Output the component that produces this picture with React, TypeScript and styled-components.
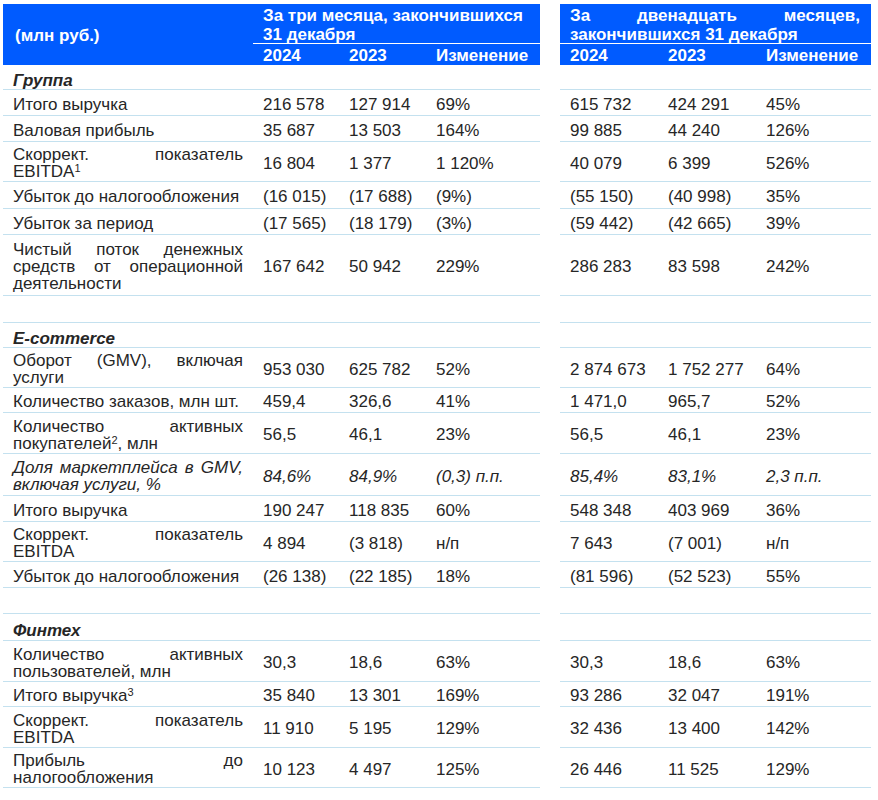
import React from 'react';
import styled, { createGlobalStyle } from 'styled-components';

const Global = createGlobalStyle`
  html, body { margin: 0; padding: 0; background: #ffffff; }
  body {
    font-family: "Liberation Sans", Arial, sans-serif;
    color: #262626;
  }
`;

const BLUE = '#005bff';
const RULE = '#c4e1ef';
const COLS = '250px 89px 88px 110px 20px 98px 98px 115px';

const Sheet = styled.div`
  width: 878px;
  box-sizing: border-box;
  padding: 4px 0 0 3px;
  font-size: 17px;
`;

const Head = styled.div`
  display: grid;
  grid-template-columns: ${COLS};
  grid-template-rows: 40px 21px;
  color: #ffffff;
  font-weight: bold;
`;

const UnitCell = styled.div`
  grid-column: 1;
  grid-row: 1 / 3;
  background: ${BLUE};
  display: flex;
  align-items: center;
  padding: 2px 0 0 12px;
`;

const PeriodCell = styled.div<{ $col: string }>`
  grid-column: ${(p) => p.$col};
  grid-row: 1;
  background: ${BLUE};
  border-bottom: 1px solid #ffffff;
  box-sizing: border-box;
  padding: 2px 11px 0 10px;
  line-height: 19px;
`;

const YearCell = styled.div<{ $col: number; $pad: number }>`
  grid-column: ${(p) => p.$col};
  grid-row: 2;
  background: ${BLUE};
  display: flex;
  align-items: center;
  padding: 2px 0 0 ${(p) => p.$pad}px;
  white-space: nowrap;
`;

const HeadGap = styled.div`
  grid-column: 5;
  grid-row: 1 / 3;
`;

const Row = styled.div<{ $h: number; $italic?: boolean }>`
  display: grid;
  grid-template-columns: ${COLS};
  height: ${(p) => p.$h}px;
  font-style: ${(p) => (p.$italic ? 'italic' : 'normal')};
`;

const Cell = styled.div<{ $pad?: number }>`
  display: flex;
  align-items: center;
  box-sizing: border-box;
  border-bottom: 1px solid ${RULE};
  padding: 3px 0 0 ${(p) => p.$pad ?? 10}px;
  white-space: nowrap;
  line-height: 17px;
`;

const LabelCell = styled(Cell)`
  padding: 3px 10px 0 10px;
  white-space: normal;
`;

const LabelText = styled.div`
  width: 230px;
`;

const SectionTitle = styled.span`
  font-weight: bold;
  font-style: italic;
  padding-top: 3px;
`;

const Gap = styled.div``;

const Line = styled.span<{ $just?: boolean }>`
  display: block;
  text-align: ${(p) => (p.$just ? 'justify' : 'left')};
  text-align-last: ${(p) => (p.$just ? 'justify' : 'auto')};
`;

const Sup = styled.sup`
  font-size: 11px;
  line-height: 0;
  vertical-align: 5px;
`;

type Kind = 'data' | 'section' | 'italic' | 'blank';

interface RowData {
  kind: Kind;
  h: number;
  label?: React.ReactNode[];
  q?: string[];
  y?: string[];
}

const rows: RowData[] = [
  { kind: 'section', h: 25, label: ['Группа'] },
  { kind: 'data', h: 26, label: ['Итого выручка'], q: ['216 578', '127 914', '69%'], y: ['615 732', '424 291', '45%'] },
  { kind: 'data', h: 26, label: ['Валовая прибыль'], q: ['35 687', '13 503', '164%'], y: ['99 885', '44 240', '126%'] },
  {
    kind: 'data',
    h: 40,
    label: ['Скоррект. показатель', <>EBITDA<Sup>1</Sup></>],
    q: ['16 804', '1 377', '1 120%'],
    y: ['40 079', '6 399', '526%'],
  },
  { kind: 'data', h: 27, label: ['Убыток до налогообложения'], q: ['(16 015)', '(17 688)', '(9%)'], y: ['(55 150)', '(40 998)', '35%'] },
  { kind: 'data', h: 26, label: ['Убыток за период'], q: ['(17 565)', '(18 179)', '(3%)'], y: ['(59 442)', '(42 665)', '39%'] },
  {
    kind: 'data',
    h: 61,
    label: ['Чистый поток денежных', 'средств от операционной', 'деятельности'],
    q: ['167 642', '50 942', '229%'],
    y: ['286 283', '83 598', '242%'],
  },
  { kind: 'blank', h: 27 },
  { kind: 'section', h: 25, label: ['E-commerce'] },
  {
    kind: 'data',
    h: 40,
    label: ['Оборот (GMV), включая', 'услуги'],
    q: ['953 030', '625 782', '52%'],
    y: ['2 874 673', '1 752 277', '64%'],
  },
  { kind: 'data', h: 25, label: ['Количество заказов, млн шт.'], q: ['459,4', '326,6', '41%'], y: ['1 471,0', '965,7', '52%'] },
  {
    kind: 'data',
    h: 41,
    label: ['Количество активных', <>покупателей<Sup>2</Sup>, млн</>],
    q: ['56,5', '46,1', '23%'],
    y: ['56,5', '46,1', '23%'],
  },
  {
    kind: 'italic',
    h: 42,
    label: ['Доля маркетплейса в GMV,', 'включая услуги, %'],
    q: ['84,6%', '84,9%', '(0,3) п.п.'],
    y: ['85,4%', '83,1%', '2,3 п.п.'],
  },
  { kind: 'data', h: 26, label: ['Итого выручка'], q: ['190 247', '118 835', '60%'], y: ['548 348', '403 969', '36%'] },
  {
    kind: 'data',
    h: 40,
    label: ['Скоррект. показатель', 'EBITDA'],
    q: ['4 894', '(3 818)', 'н/п'],
    y: ['7 643', '(7 001)', 'н/п'],
  },
  { kind: 'data', h: 26, label: ['Убыток до налогообложения'], q: ['(26 138)', '(22 185)', '18%'], y: ['(81 596)', '(52 523)', '55%'] },
  { kind: 'blank', h: 26 },
  { kind: 'section', h: 27, label: ['Финтех'] },
  {
    kind: 'data',
    h: 41,
    label: ['Количество активных', 'пользователей, млн'],
    q: ['30,3', '18,6', '63%'],
    y: ['30,3', '18,6', '63%'],
  },
  { kind: 'data', h: 25, label: [<>Итого выручка<Sup>3</Sup></>], q: ['35 840', '13 301', '169%'], y: ['93 286', '32 047', '191%'] },
  {
    kind: 'data',
    h: 41,
    label: ['Скоррект. показатель', 'EBITDA'],
    q: ['11 910', '5 195', '129%'],
    y: ['32 436', '13 400', '142%'],
  },
  {
    kind: 'data',
    h: 40,
    label: ['Прибыль до', 'налогообложения'],
    q: ['10 123', '4 497', '125%'],
    y: ['26 446', '11 525', '129%'],
  },
];

const QPAD = [10, 7, 6];
const YPAD = [10, 10, 10];

function Label({ lines }: { lines: React.ReactNode[] }) {
  return (
    <LabelText>
      {lines.map((l, i) => (
        <Line key={i} $just={lines.length > 1 && i < lines.length - 1}>
          {l}
        </Line>
      ))}
    </LabelText>
  );
}

function BodyRow({ r }: { r: RowData }) {
  const q = r.q ?? ['', '', ''];
  const y = r.y ?? ['', '', ''];
  return (
    <Row $h={r.h} $italic={r.kind === 'italic'}>
      <LabelCell>
        {r.kind === 'section' && <SectionTitle>{r.label?.[0]}</SectionTitle>}
        {(r.kind === 'data' || r.kind === 'italic') && r.label && <Label lines={r.label} />}
      </LabelCell>
      {q.map((v, i) => (
        <Cell key={'q' + i} $pad={QPAD[i]}>
          {v}
        </Cell>
      ))}
      <Gap />
      {y.map((v, i) => (
        <Cell key={'y' + i} $pad={YPAD[i]}>
          {v}
        </Cell>
      ))}
    </Row>
  );
}

export default function App() {
  return (
    <>
      <Global />
      <Sheet>
        <Head>
          <UnitCell>(млн руб.)</UnitCell>
          <PeriodCell $col="2 / 5">
            За три месяца, закончившихся
            <br />
            31 декабря
          </PeriodCell>
          <HeadGap />
          <PeriodCell $col="6 / 9">
            <Line $just>За двенадцать месяцев,</Line>
            <Line>закончившихся 31 декабря</Line>
          </PeriodCell>
          <YearCell $col={2} $pad={10}>2024</YearCell>
          <YearCell $col={3} $pad={7}>2023</YearCell>
          <YearCell $col={4} $pad={6}>Изменение</YearCell>
          <YearCell $col={6} $pad={10}>2024</YearCell>
          <YearCell $col={7} $pad={10}>2023</YearCell>
          <YearCell $col={8} $pad={10}>Изменение</YearCell>
        </Head>
        {rows.map((r, i) => (
          <BodyRow key={i} r={r} />
        ))}
      </Sheet>
    </>
  );
}
